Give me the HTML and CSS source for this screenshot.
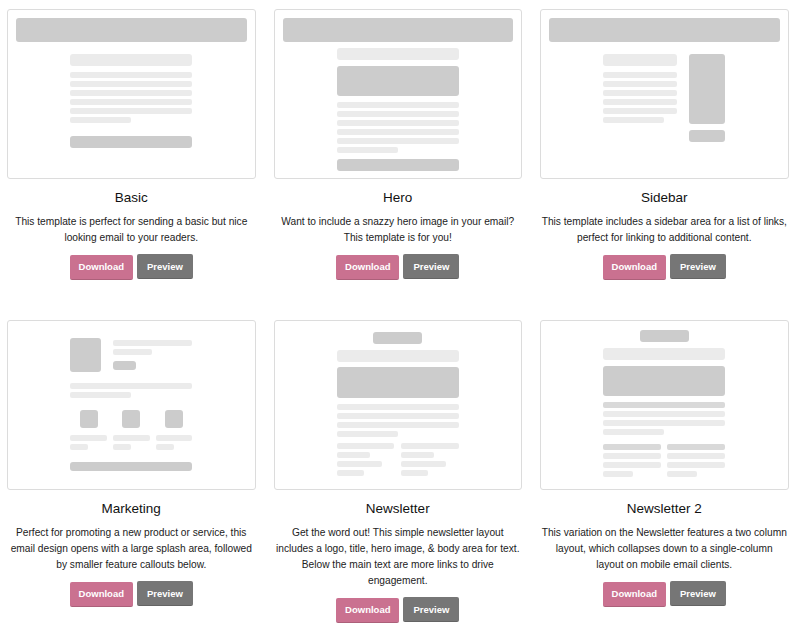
FILE: index.html
```html
<!DOCTYPE html>
<html lang="en">
  <head>
    <meta charset="UTF-8" />
    <meta name="viewport" content="width=device-width, initial-scale=1.0" />
    <title>Email Templates</title>
    <link rel="stylesheet" href="styles.css">
  </head>
  <body>
    <div class="templates">

      <!-- Basic -->
      <div class="card">
        <div class="thumb">
          <div class="sk bar"></div>
          <div class="col basic">
            <div class="sk title"></div>
            <div class="lines">
              <div class="sk line"></div>
              <div class="sk line"></div>
              <div class="sk line"></div>
              <div class="sk line"></div>
              <div class="sk line"></div>
              <div class="sk line short"></div>
            </div>
            <div class="sk btn"></div>
          </div>
        </div>
        <h3>Basic</h3>
        <p>This template is perfect for sending a basic but nice looking email to your readers.</p>
        <div class="actions">
          <a class="download-btn" href="#">Download</a>
          <a class="preview-btn" href="#">Preview</a>
        </div>
      </div>

      <!-- Hero -->
      <div class="card">
        <div class="thumb">
          <div class="sk bar"></div>
          <div class="col hero">
            <div class="sk title"></div>
            <div class="sk hero-img"></div>
            <div class="lines">
              <div class="sk line"></div>
              <div class="sk line"></div>
              <div class="sk line"></div>
              <div class="sk line"></div>
              <div class="sk line"></div>
              <div class="sk line short"></div>
            </div>
            <div class="sk btn"></div>
          </div>
        </div>
        <h3>Hero</h3>
        <p>Want to include a snazzy hero image in your email? This template is for you!</p>
        <div class="actions">
          <a class="download-btn" href="#">Download</a>
          <a class="preview-btn" href="#">Preview</a>
        </div>
      </div>

      <!-- Sidebar -->
      <div class="card">
        <div class="thumb">
          <div class="sk bar"></div>
          <div class="col sidebar">
            <div class="main">
              <div class="sk title"></div>
              <div class="lines">
                <div class="sk line"></div>
                <div class="sk line"></div>
                <div class="sk line"></div>
                <div class="sk line"></div>
                <div class="sk line"></div>
                <div class="sk line short"></div>
              </div>
            </div>
            <div class="side">
              <div class="sk side-box"></div>
              <div class="sk btn"></div>
            </div>
          </div>
        </div>
        <h3>Sidebar</h3>
        <p>This template includes a sidebar area for a list of links, perfect for linking to additional content.</p>
        <div class="actions">
          <a class="download-btn" href="#">Download</a>
          <a class="preview-btn" href="#">Preview</a>
        </div>
      </div>

      <!-- Marketing -->
      <div class="card">
        <div class="thumb">
          <div class="col marketing">
            <div class="splash">
              <div class="sk splash-img"></div>
              <div class="splash-text">
                <div class="sk line"></div>
                <div class="sk line" style="width: 39px"></div>
                <div class="sk small-btn"></div>
              </div>
            </div>
            <div class="lines">
              <div class="sk line"></div>
              <div class="sk line short"></div>
            </div>
            <div class="features">
              <div class="feature">
                <div class="sk icon"></div>
                <div class="sk line"></div>
                <div class="sk line" style="width: 18px"></div>
              </div>
              <div class="feature">
                <div class="sk icon"></div>
                <div class="sk line"></div>
                <div class="sk line" style="width: 18px"></div>
              </div>
              <div class="feature">
                <div class="sk icon"></div>
                <div class="sk line"></div>
                <div class="sk line" style="width: 18px"></div>
              </div>
            </div>
            <div class="sk wide-btn"></div>
          </div>
        </div>
        <h3>Marketing</h3>
        <p>Perfect for promoting a new product or service, this email design opens with a large splash area, followed by smaller feature callouts below.</p>
        <div class="actions">
          <a class="download-btn" href="#">Download</a>
          <a class="preview-btn" href="#">Preview</a>
        </div>
      </div>

      <!-- Newsletter -->
      <div class="card">
        <div class="thumb">
          <div class="col newsletter">
            <div class="sk logo"></div>
            <div class="sk title"></div>
            <div class="sk hero-img"></div>
            <div class="lines">
              <div class="sk line"></div>
              <div class="sk line"></div>
              <div class="sk line"></div>
              <div class="sk line short"></div>
            </div>
            <div class="two-col">
              <div class="lines">
                <div class="sk line"></div>
                <div class="sk line" style="width: 33px"></div>
                <div class="sk line" style="width: 45px"></div>
                <div class="sk line" style="width: 27px"></div>
              </div>
              <div class="lines">
                <div class="sk line"></div>
                <div class="sk line" style="width: 33px"></div>
                <div class="sk line" style="width: 45px"></div>
                <div class="sk line" style="width: 27px"></div>
              </div>
            </div>
          </div>
        </div>
        <h3>Newsletter</h3>
        <p>Get the word out! This simple newsletter layout includes a logo, title, hero image, &amp; body area for text. Below the main text are more links to drive engagement.</p>
        <div class="actions">
          <a class="download-btn" href="#">Download</a>
          <a class="preview-btn" href="#">Preview</a>
        </div>
      </div>

      <!-- Newsletter 2 -->
      <div class="card">
        <div class="thumb">
          <div class="col newsletter two">
            <div class="sk logo"></div>
            <div class="sk title"></div>
            <div class="sk hero-img"></div>
            <div class="lines">
              <div class="sk line heading"></div>
              <div class="sk line"></div>
              <div class="sk line"></div>
              <div class="sk line short"></div>
            </div>
            <div class="two-col">
              <div class="lines">
                <div class="sk line heading"></div>
                <div class="sk line"></div>
                <div class="sk line"></div>
                <div class="sk line" style="width: 30px"></div>
              </div>
              <div class="lines">
                <div class="sk line heading"></div>
                <div class="sk line"></div>
                <div class="sk line"></div>
                <div class="sk line" style="width: 30px"></div>
              </div>
            </div>
          </div>
        </div>
        <h3>Newsletter 2</h3>
        <p>This variation on the Newsletter features a two column layout, which collapses down to a single-column layout on mobile email clients.</p>
        <div class="actions">
          <a class="download-btn" href="#">Download</a>
          <a class="preview-btn" href="#">Preview</a>
        </div>
      </div>

    </div>
  </body>
</html>
```

FILE: styles.css
```css
body {
  font-family: "Liberation Sans", Arial, sans-serif;
  background-color: #fff;
  color: #222;
  margin: 0;
  padding: 0;
}

.templates {
  display: grid;
  grid-template-columns: repeat(3, 248.5px);
  column-gap: 18px;
  row-gap: 40px;
  align-items: start;
  padding: 9px 0 0 7px;
}

.card {
  text-align: center;
}

.thumb {
  box-sizing: border-box;
  height: 170px;
  padding: 8px;
  border: 1px solid #dcdcdc;
  border-radius: 3px;
  background-color: #fff;
}

/* Skeleton blocks */
.sk {
  background-color: #ebebeb;
  border-radius: 2px;
}

.bar {
  height: 24px;
  background-color: #ccc;
  border-radius: 3px;
}

.col {
  width: 122px;
  margin: 0 auto;
  display: flex;
  flex-direction: column;
}

.title {
  height: 12px;
  border-radius: 3px;
}

.lines {
  display: flex;
  flex-direction: column;
  gap: 3px;
}

.line {
  height: 6px;
}

.line.short {
  width: 61px;
}

.btn {
  height: 12px;
  background-color: #ccc;
  border-radius: 3px;
}

.hero-img {
  height: 30px;
  background-color: #ccc;
  border-radius: 3px;
}

/* Basic */
.basic {
  margin-top: 12px;
}

.basic .lines {
  margin: 6px 0 13px;
}

/* Hero */
.hero {
  margin-top: 6px;
  gap: 6px;
}

/* Sidebar */
.sidebar {
  margin-top: 12px;
  flex-direction: row;
  gap: 12px;
}

.sidebar .main {
  width: 74px;
}

.sidebar .lines {
  margin-top: 6px;
}

.sidebar .side {
  flex: 1;
  display: flex;
  flex-direction: column;
  gap: 6px;
}

.side-box {
  height: 70px;
  background-color: #ccc;
  border-radius: 3px;
}

/* Marketing */
.marketing {
  margin-top: 9px;
}

.splash {
  display: flex;
  gap: 12px;
}

.splash-img {
  width: 31px;
  height: 34px;
  background-color: #ccc;
  border-radius: 3px;
}

.splash-text {
  flex: 1;
  display: flex;
  flex-direction: column;
  align-items: flex-start;
  padding-top: 2px;
  gap: 3px;
}

.splash-text .line {
  width: 100%;
}

.small-btn {
  width: 23px;
  height: 9px;
  margin-top: 3px;
  background-color: #ccc;
  border-radius: 3px;
}

.marketing .lines {
  margin-top: 11px;
}

.features {
  display: flex;
  gap: 6px;
  margin-top: 12px;
}

.feature {
  flex: 1;
  display: flex;
  flex-direction: column;
  gap: 3px;
}

.feature .icon {
  width: 18px;
  height: 18px;
  margin: 0 auto 4px;
  background-color: #ccc;
  border-radius: 3px;
}

.wide-btn {
  height: 9px;
  margin-top: 12px;
  background-color: #ccc;
  border-radius: 3px;
}

/* Newsletter */
.newsletter {
  margin-top: 3px;
  gap: 6px;
}

.newsletter .logo {
  width: 49px;
  height: 12px;
  margin: 0 auto;
  background-color: #ccc;
  border-radius: 3px;
}

.newsletter .hero-img {
  height: 31px;
  margin-top: -1px;
}

.two-col {
  display: flex;
  gap: 7px;
}

.two-col .lines {
  flex: 1;
}

.newsletter.two {
  margin-top: 1px;
}

.newsletter.two .hero-img {
  height: 30px;
  margin-top: 0;
}

.newsletter.two .two-col {
  gap: 6px;
  margin-top: 3px;
}

.heading {
  background-color: #d9d9d9;
}

/* Text */
h3 {
  margin: 9px 0 0;
  font-size: 13.5px;
  font-weight: normal;
  line-height: 20px;
  color: #111;
}

p {
  margin: 6px 0 0;
  padding: 0 1px;
  font-size: 10.2px;
  line-height: 16px;
}

.actions {
  margin-top: 8px;
  font-size: 0;
}

.download-btn,
.preview-btn {
  display: inline-block;
  box-sizing: border-box;
  height: 25px;
  padding: 0 9px;
  font-size: 9.5px;
  font-weight: bold;
  line-height: 24px;
  color: white;
  text-decoration: none;
  border-radius: 2px;
  border-bottom: 1px solid rgba(0, 0, 0, 0.15);
}

.download-btn {
  background-color: #ca7190;
  line-height: 23px;
  margin-right: 4px;
}

.preview-btn {
  background-color: #767676;
  line-height: 25px;
  padding: 0 10px;
}
```
